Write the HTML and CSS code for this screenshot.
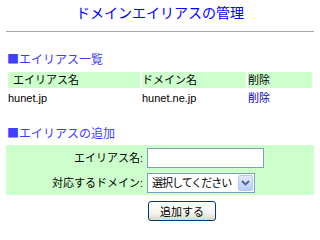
FILE: index.html
```html
<!DOCTYPE html>
<html lang="ja">
<head>
<meta charset="utf-8">
<title>ドメインエイリアスの管理</title>
<link rel="stylesheet" href="styles.css">
</head>
<body>
<h1 class="title">ドメインエイリアスの管理</h1>
<hr class="rule">
<h2 class="section"><span class="mark">■</span>エイリアス一覧</h2>
<table class="list">
  <tr class="list-head">
    <th class="col-alias">エイリアス名</th>
    <th class="col-domain">ドメイン名</th>
    <th class="col-del">削除</th>
  </tr>
  <tr>
    <td>hunet.jp</td>
    <td>hunet.ne.jp</td>
    <td><a class="del" href="#">削除</a></td>
  </tr>
</table>
<h2 class="section section-add"><span class="mark">■</span>エイリアスの追加</h2>
<form class="add-form">
  <div class="form-box">
    <label class="lbl" for="alias">エイリアス名:</label>
    <input class="txt" id="alias" type="text">
    <label class="lbl" for="dom">対応するドメイン:</label>
    <span class="sel-wrap">
      <select class="sel" id="dom"><option>選択してください</option></select>
      <span class="sel-btn"><svg width="9" height="6" viewBox="0 0 9 6"><path d="M1 1 L4.5 4.5 L8 1" fill="none" stroke="#4d6185" stroke-width="1.8"/></svg></span>
    </span>
  </div>
  <div class="actions">
    <button class="btn" type="button">追加する</button>
  </div>
</form>
</body>
</html>
```
FILE: styles.css
```css
html, body {
  margin: 0;
  padding: 0;
  background: #fff;
}
body {
  padding: 0 6px;
  font-family: "Liberation Sans", "Noto Sans CJK JP", sans-serif;
  font-size: 11px;
  color: #000;
}
.title {
  margin: 0;
  padding-top: 3px;
  font-size: 14px;
  line-height: 20px;
  font-weight: normal;
  text-align: center;
  color: #0000ff;
}
.rule {
  margin: 8px 0 0;
  border: 0;
  height: 1px;
  background: #a8a8a8;
}
.section {
  margin: 19px 0 2px;
  font-size: 12px;
  line-height: 16px;
  font-weight: normal;
  color: #3c3cff;
  padding-left: 1px;
}
.mark {
  font-family: "Noto Sans CJK JP", sans-serif;
  font-size: 12px;
  color: #4040ff;
}
.section-add {
  margin: 17px 0 3px;
}
.list {
  width: 100%;
  border-collapse: separate;
  border-spacing: 2px;
  margin: 0;
}
.list th, .list td {
  padding: 0;
  height: 16px;
  line-height: 16px;
  text-align: left;
  font-weight: normal;
  white-space: nowrap;
}
.list-head th {
  background: #ccffcc;
}
.list th.col-alias { width: 127px; padding-left: 5px; }
.list th.col-domain { width: 104px; }
.del {
  color: #0000cc;
  text-decoration: none;
}
.add-form {
  margin: 0;
}
.form-box {
  background: #ccffcc;
  display: grid;
  grid-template-columns: 137px auto;
  column-gap: 4px;
  row-gap: 5px;
  padding: 3px 0 2px;
  align-items: center;
}
.lbl {
  text-align: right;
  line-height: 20px;
  white-space: nowrap;
}
.txt {
  box-sizing: border-box;
  width: 117px;
  height: 20px;
  margin: 0;
  border: 1px solid #7f9db9;
  background: #fff;
  padding: 0 3px;
  font: inherit;
  justify-self: start;
}
.sel-wrap {
  position: relative;
  justify-self: start;
  width: 108px;
  height: 20px;
}
.sel {
  box-sizing: border-box;
  width: 108px;
  height: 20px;
  margin: 0;
  border: 1px solid #7f9db9;
  border-radius: 0;
  background: #fff;
  -webkit-appearance: none;
  appearance: none;
  padding: 0 0 0 4px;
  font: inherit;
  letter-spacing: -1px;
  color: #000;
  outline: none;
}
.sel-btn {
  position: absolute;
  top: 2px;
  right: 2px;
  width: 15px;
  height: 16px;
  box-sizing: border-box;
  border: 1px solid #b4c8f4;
  border-radius: 2px;
  background: linear-gradient(#e2eafe, #b7ccf8);
  display: flex;
  align-items: center;
  justify-content: center;
  pointer-events: none;
}
.actions {
  padding: 6px 0 0 142px;
}
.btn {
  box-sizing: border-box;
  width: 68px;
  height: 20px;
  margin: 0;
  padding: 0;
  border: 1px solid #003c74;
  border-radius: 3px;
  background: linear-gradient(#ffffff 0%, #f5f4ee 60%, #dcd8c8 100%);
  font: inherit;
  color: #000;
}
```
